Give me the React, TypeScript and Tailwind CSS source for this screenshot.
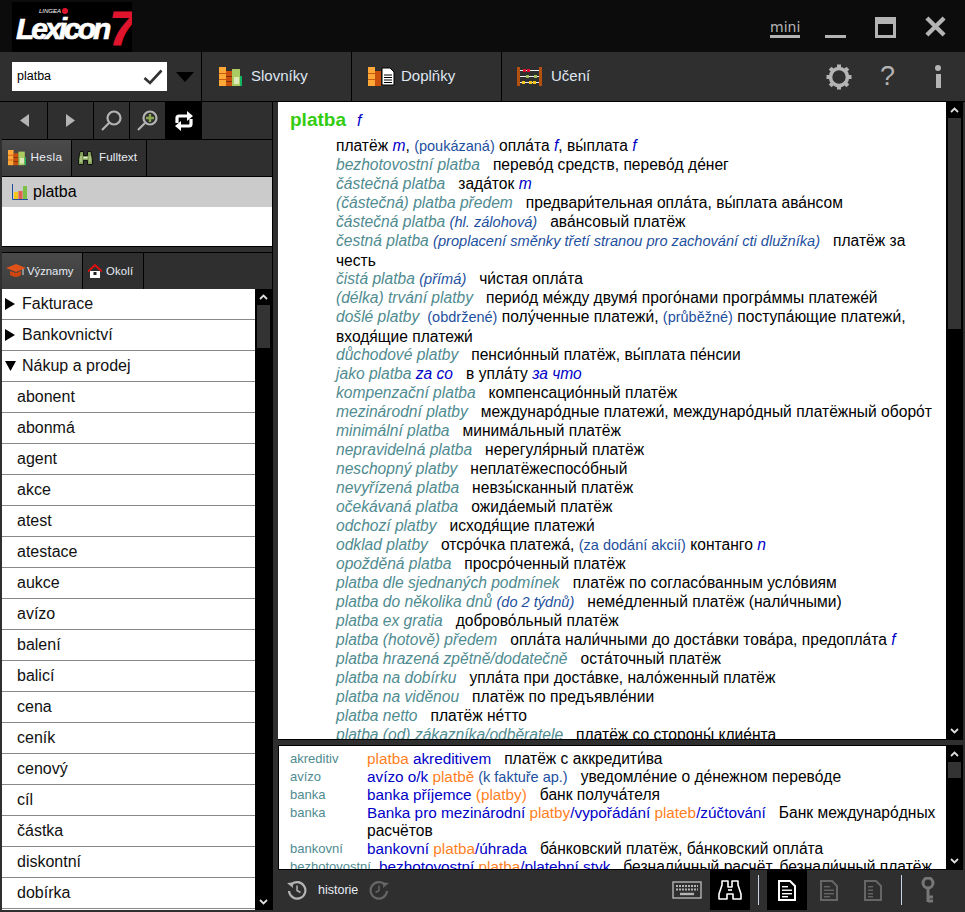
import React from 'react';

type Seg = [string, string];
const cls: Record<string, string> = {
  c: 'text-black',
  t: 'italic text-[#4f8b90]',
  b: 'italic text-[#0000c8]',
  z: 'text-[#0000c8]',
  d: 'text-[#1d4f9e] text-[14.5px]',
  i: 'italic text-[#1d4f9e] text-[14.6px]',
};
const G = '\u00a0\u00a0 ';
const A = '\u0301';
const mainLines: Seg[][] = [
  [['c', 'платёж '], ['b', 'm'], ['c', ', '], ['d', '(poukázaná)'], ['c', ` опла${A}та `], ['b', 'f'], ['c', `, вы${A}плата `], ['b', 'f']],
  [['t', 'bezhotovostní platba'], ['c', `${G}перево${A}д средств, перево${A}д де${A}нег`]],
  [['t', 'částečná platba'], ['c', `${G}зада${A}ток `], ['b', 'm']],
  [['t', '(částečná) platba předem'], ['c', `${G}предвари${A}тельная опла${A}та, вы${A}плата ава${A}нсом`]],
  [['t', 'částečná platba '], ['i', '(hl. zálohová)'], ['c', `${G}ава${A}нсовый платёж`]],
  [['t', 'čestná platba '], ['i', '(proplacení směnky třetí stranou pro zachování cti dlužníka)'], ['c', `${G}платёж за честь`]],
  [['t', 'čistá platba '], ['i', '(přímá)'], ['c', `${G}чи${A}стая опла${A}та`]],
  [['t', '(délka) trvání platby'], ['c', `${G}перио${A}д ме${A}жду двумя${A} прого${A}нами програ${A}ммы платеже${A}й`]],
  [['t', 'došlé platby'], ['d', '\u00a0\u00a0(obdržené)'], ['c', ` полу${A}ченные платежи${A}, `], ['d', '(průběžné)'], ['c', ` поступа${A}ющие платежи${A}, входя${A}щие платежи${A}`]],
  [['t', 'důchodové platby'], ['c', `${G}пенсио${A}нный платёж, вы${A}плата пе${A}нсии`]],
  [['t', 'jako platba '], ['b', 'za co'], ['c', `${G}в упла${A}ту `], ['b', 'за что']],
  [['t', 'kompenzační platba'], ['c', `${G}компенсацио${A}нный платёж`]],
  [['t', 'mezinárodní platby'], ['c', `${G}междунаро${A}дные платежи${A}, междунаро${A}дный платёжный оборо${A}т`]],
  [['t', 'minimální platba'], ['c', `${G}минима${A}льный платёж`]],
  [['t', 'nepravidelná platba'], ['c', `${G}нерегуля${A}рный платёж`]],
  [['t', 'neschopný platby'], ['c', `${G}неплатёжеспосо${A}бный`]],
  [['t', 'nevyřízená platba'], ['c', `${G}невзы${A}сканный платёж`]],
  [['t', 'očekávaná platba'], ['c', `${G}ожида${A}емый платёж`]],
  [['t', 'odchozí platby'], ['c', `${G}исходя${A}щие платежи${A}`]],
  [['t', 'odklad platby'], ['c', `${G}отсро${A}чка платежа${A}, `], ['d', '(za dodání akcií)'], ['c', ' контанго '], ['b', 'n']],
  [['t', 'opožděná platba'], ['c', `${G}просро${A}ченный платёж`]],
  [['t', 'platba dle sjednaných podmínek'], ['c', `${G}платёж по согласо${A}ванным усло${A}виям`]],
  [['t', 'platba do několika dnů '], ['i', '(do 2 týdnů)'], ['c', `${G}неме${A}дленный платёж (нали${A}чными)`]],
  [['t', 'platba ex gratia'], ['c', `${G}доброво${A}льный платёж`]],
  [['t', 'platba (hotově) předem'], ['c', `${G}опла${A}та нали${A}чными до доста${A}вки това${A}ра, предопла${A}та `], ['b', 'f']],
  [['t', 'platba hrazená zpětně/dodatečně'], ['c', `${G}оста${A}точный платёж`]],
  [['t', 'platba na dobírku'], ['c', `${G}упла${A}та при доста${A}вке, нало${A}женный платёж`]],
  [['t', 'platba na viděnou'], ['c', `${G}платёж по предъявле${A}нии`]],
  [['t', 'platba netto'], ['c', `${G}платёж не${A}тто`]],
  [['t', 'platba (od) zákazníka/odběratele'], ['c', `${G}платёж со стороны${A} клие${A}нта`]],
];

const bCls: Record<string, string> = {
  o: 'text-[#ff7f1e] text-[15.3px]',
  n: 'text-[#0000c8] text-[15.3px]',
  d: 'text-[#1d4f9e] text-[14.5px]',
  c: 'text-black',
};
const bottomRows: { w: string; s: Seg[]; wide?: boolean; tall?: boolean }[] = [
  { w: 'akreditiv', s: [['o', 'platba'], ['n', ' akreditivem'], ['c', `${G}платёж с аккредити${A}ва`]] },
  { w: 'avízo', s: [['n', 'avízo o/k '], ['o', 'platbě'], ['d', ' (k faktuře ap.)'], ['c', `${G}уведомле${A}ние о де${A}нежном перево${A}де`]] },
  { w: 'banka', s: [['n', 'banka příjemce '], ['o', '(platby)'], ['c', `${G}банк получа${A}теля`]] },
  { w: 'banka', tall: true, s: [['n', 'Banka pro mezinárodní '], ['o', 'platby'], ['n', '/vypořádání '], ['o', 'plateb'], ['n', '/zúčtování'], ['c', `${G}Банк междунаро${A}дных расчётов`]] },
  { w: 'bankovní', s: [['n', 'bankovní '], ['o', 'platba'], ['n', '/úhrada'], ['c', `${G}ба${A}нковский платёж, ба${A}нковский опла${A}та`]] },
  { w: 'bezhotovostní', wide: true, s: [['n', 'bezhotovostní '], ['o', 'platba'], ['n', '/platební styk'], ['c', `${G}безнали${A}чный расчёт, безнали${A}чный платёж`]] },
];

const leftRows = ['abonent', 'abonmá', 'agent', 'akce', 'atest', 'atestace', 'aukce', 'avízo', 'balení', 'balicí', 'cena', 'ceník', 'cenový', 'cíl', 'částka', 'diskontní', 'dobírka'];

function Books({ s = 1 }: { s?: number }) {
  return (
    <svg width={23 * s} height={19 * s} viewBox="0 0 23 19" className="shrink-0">
      <rect x="0" y="0" width="7" height="19" fill="#ffa838" />
      <rect x="0" y="6" width="7" height="1" fill="#c85a10" />
      <rect x="0" y="12" width="7" height="1" fill="#c85a10" />
      <rect x="7" y="4" width="6" height="15" fill="#c94f0c" />
      <rect x="7" y="9" width="6" height="1" fill="#7d2c04" />
      <rect x="7" y="14" width="6" height="1" fill="#7d2c04" />
      <rect x="13" y="2" width="8" height="17" fill="#a9cb62" />
      <rect x="15" y="10" width="5" height="7" fill="#dde9b8" />
      <rect x="21" y="9" width="2" height="10" fill="#12b560" />
    </svg>
  );
}

function Abacus() {
  return (
    <svg width="25" height="19" viewBox="0 0 25 19" className="shrink-0">
      <rect x="0" y="0" width="3" height="19" fill="#b5510f" />
      <rect x="22" y="0" width="3" height="19" fill="#b5510f" />
      <rect x="3" y="3" width="19" height="1" fill="#eee" />
      <rect x="3" y="9" width="19" height="1" fill="#eee" />
      <rect x="3" y="15" width="19" height="1" fill="#eee" />
      <rect x="6" y="2" width="3" height="3" fill="#e0102c" />
      <rect x="10" y="2" width="3" height="3" fill="#e0102c" />
      <rect x="9" y="8" width="3" height="3" fill="#9fbf58" />
      <rect x="17" y="8" width="3" height="3" fill="#9fbf58" />
      <rect x="5" y="14" width="3" height="3" fill="#f5c518" />
      <rect x="12" y="14" width="3" height="3" fill="#f5c518" />
      <rect x="16" y="14" width="3" height="3" fill="#f5c518" />
    </svg>
  );
}

function BinocularsSmall() {
  return (
    <svg width="15" height="14" viewBox="0 0 15 14" className="shrink-0">
      <path d="M2 .5h3.5v4h4v-4H13l1.5 8v5h-5v-4h-4v4h-5v-5z" fill="#83a35a" stroke="#111" strokeWidth="1" />
      <path d="M5.5 6h4v1.5h-4z" fill="#e8f0d0" />
      <path d="M3 5v6M12 5v6" stroke="#c3d69a" strokeWidth="1.2" />
    </svg>
  );
}

function BinocularsBig() {
  return (
    <svg width="24" height="24" viewBox="0 0 24 24" className="shrink-0">
      <path d="M4 3h6v6h4V3h6v4l3 9v5h-8v-5h-6v5H1v-5l3-9z" fill="#000" stroke="#fff" strokeWidth="1.6" strokeLinejoin="round" />
      <path d="M10 12h4" stroke="#fff" strokeWidth="1.6" />
    </svg>
  );
}

function Doc({ color, filled, dotted }: { color: string; filled?: boolean; dotted?: boolean }) {
  return (
    <svg width="18" height="21" viewBox="0 0 18 21">
      <path d="M1 1h11l5 5v14H1z" fill={filled ? '#000' : 'none'} stroke={color} strokeWidth="2" />
      {[6, 9.5, 13, 16].map((y, i) => (
        <rect key={y} x="4" y={y} width={dotted ? 5 : i === 0 ? 6 : i === 3 ? 6 : 10} height="1.4" fill={color} />
      ))}
    </svg>
  );
}

function Mag({ plus }: { plus?: boolean }) {
  return (
    <svg width="21" height="21" viewBox="0 0 21 21">
      <circle cx="13" cy="8" r="6.5" fill="none" stroke="#b4b4b4" strokeWidth="2.2" />
      <path d="M8 13l-7 7" stroke="#b4b4b4" strokeWidth="2.2" />
      {plus && <path d="M13 4v8M9 8h8" stroke="#8aa84f" strokeWidth="2.4" />}
    </svg>
  );
}

function HistoryIcon({ color, flip }: { color: string; flip?: boolean }) {
  return (
    <svg width="20" height="20" viewBox="0 0 20 20" className={flip ? '-scale-x-100' : ''}>
      <path d="M4 5A8.2 8.2 0 1 1 2 11" fill="none" stroke={color} strokeWidth="2.2" />
      <path d="M0 3l5.5-.5L6 8z" fill={color} />
      <path d="M10 5.5V10.5l3.5 2" fill="none" stroke={color} strokeWidth="1.5" />
    </svg>
  );
}

function Scrollbar({ thumbH }: { thumbH: string }) {
  return (
    <div className="w-[17px] shrink-0 bg-black flex flex-col items-center">
      <div className="h-[16px] shrink-0 flex items-center justify-center">
        <svg width="9" height="6" viewBox="0 0 9 6"><path d="M1 5l3.5-3.5L8 5" fill="none" stroke="#ddd" strokeWidth="1.8" /></svg>
      </div>
      <div className={`w-[13px] shrink-0 bg-[#333] ${thumbH}`} />
      <div className="flex-1" />
      <div className="h-[16px] shrink-0 flex items-center justify-center">
        <svg width="9" height="6" viewBox="0 0 9 6"><path d="M1 1l3.5 3.5L8 1" fill="none" stroke="#ddd" strokeWidth="1.8" /></svg>
      </div>
    </div>
  );
}

const Segs = ({ s, map }: { s: Seg[]; map: Record<string, string> }) => (
  <>
    {s.map((x, i) => (
      <span key={i} className={map[x[0]]}>{x[1]}</span>
    ))}
  </>
);

export default function App() {
  return (
    <div className="w-[965px] h-[912px] flex flex-col overflow-hidden bg-[#2f2f2f] font-['Liberation_Sans',Arial,sans-serif]">
      {/* title bar */}
      <div className="h-[52px] shrink-0 bg-[#0c0c0c] flex items-start pl-[12px]">
        <div className="w-[120px] h-[50px] mt-[2px] bg-black relative overflow-hidden flex items-start pl-[4px]">
          <span className="text-white font-bold italic text-[30px] tracking-[-3px] leading-none mt-[12px] [-webkit-text-stroke:0.7px_white]">Lexicon</span>
          <span className="text-[#e0142c] font-bold italic text-[48px] leading-none ml-[1px] mt-[3px] [-webkit-text-stroke:1px_#e0142c]">7</span>
          <span className="absolute left-[27px] top-[6px] text-[6px] italic text-white leading-none">LINGEA</span>
          <span className="absolute left-[50px] top-[6px] w-[6px] h-[6px] rounded-full bg-[#e0142c]" />
        </div>
        <div className="flex-1" />
        <div className="flex items-start text-[#b4b4b4] pr-[19px]">
          <div className="mt-[19px] h-[19px] w-[30px] border-b-[3px] border-[#b4b4b4] font-['DejaVu_Sans',sans-serif] text-[14px] leading-[16px]">mini</div>
          <div className="ml-[25px] mt-[35px] w-[21px] h-[3px] bg-[#b4b4b4]" />
          <div className="ml-[29px] mt-[17px] w-[21px] h-[21px] border-[3px] border-t-[7px] border-[#b4b4b4]" />
          <svg className="ml-[29px] mt-[16px]" width="21" height="21" viewBox="0 0 22 22"><path d="M2 2l18 18M20 2L2 20" stroke="#b4b4b4" strokeWidth="4.5" /></svg>
        </div>
      </div>
      {/* toolbar */}
      <div className="h-[50px] shrink-0 flex bg-[#2f2f2f] border-b border-black text-[#dfe6f2] text-[15px]">
        <div className="w-[202px] shrink-0 flex items-center pl-[12px] border-r border-black">
          <div className="w-[155px] h-[29px] bg-white flex items-center justify-between pl-[5px] pr-[4px] text-[12.5px] text-black">
            <span>platba</span>
            <svg width="20" height="16" viewBox="0 0 20 16"><path d="M1.5 9l5.5 5L18.5 1.5" fill="none" stroke="#333" strokeWidth="2.6" /></svg>
          </div>
          <svg className="ml-[9px]" width="18" height="10" viewBox="0 0 18 10"><path d="M0 0h18L9 10z" fill="#000" /></svg>
        </div>
        <div className="w-[150px] shrink-0 flex items-center pl-[17px] gap-[9px] border-r border-black">
          <Books /><span>Slovníky</span>
        </div>
        <div className="w-[150px] shrink-0 flex items-center pl-[16px] gap-[6px] border-r border-black">
          <div className="flex items-end">
            <svg width="13" height="19" viewBox="0 0 13 19"><rect width="7" height="19" fill="#ffa838" /><rect x="7" y="4" width="6" height="15" fill="#c94f0c" /><rect y="6" width="7" height="1" fill="#c85a10" /><rect y="12" width="7" height="1" fill="#c85a10" /></svg>
            <svg width="14" height="19" viewBox="0 0 14 19"><path d="M1 1h8l4 4v13H1z" fill="#fff" stroke="#000" strokeWidth="1" /><path d="M3 8h8M3 10.5h8M3 13h8M3 15.5h8" stroke="#000" /></svg>
          </div>
          <span>Doplňky</span>
        </div>
        <div className="w-[150px] shrink-0 flex items-center pl-[15px] gap-[9px]">
          <Abacus /><span>Učení</span>
        </div>
        <div className="flex-1" />
        <div className="flex items-center text-[#b4b4b4] pr-[24px]">
          <svg width="26" height="26" viewBox="0 0 26 26">
            <circle cx="13" cy="13" r="8.5" fill="none" stroke="#b4b4b4" strokeWidth="3.6" />
            {[0, 45, 90, 135, 180, 225, 270, 315].map((a) => (
              <rect key={a} x="11" y="0.5" width="4" height="4" fill="#b4b4b4" transform={`rotate(${a} 13 13)`} />
            ))}
          </svg>
          <span className="ml-[28px] text-[27px] leading-none">?</span>
          <div className="ml-[40px] flex flex-col items-center gap-[3px]">
            <div className="w-[6px] h-[6px] rounded-full bg-[#b4b4b4]" />
            <div className="w-[5px] h-[14px] bg-[#b4b4b4]" />
          </div>
        </div>
      </div>
      {/* body */}
      <div className="flex-1 min-h-0 flex pl-[2px] pr-[2px] pb-[2px]">
        {/* left */}
        <div className="w-[271px] shrink-0 flex flex-col border-r border-black">
          <div className="h-[38px] shrink-0 flex border-b border-black">
            <div className="w-[46px] border-r border-black flex items-center justify-center">
              <svg width="9" height="13" viewBox="0 0 9 13"><path d="M9 0v13L0 6.5z" fill="#b4b4b4" /></svg>
            </div>
            <div className="w-[46px] border-r border-black flex items-center justify-center">
              <svg width="9" height="13" viewBox="0 0 9 13"><path d="M0 0v13l9-6.5z" fill="#b4b4b4" /></svg>
            </div>
            <div className="w-[36px] border-r border-black flex items-center justify-center"><Mag /></div>
            <div className="w-[35px] flex items-center justify-center"><Mag plus /></div>
            <div className="w-[37px] bg-black flex items-center justify-center">
              <svg width="20" height="20" viewBox="0 0 20 20"><path d="M3 12V7q0-2 2-2h9M17 8v5q0 2-2 2H6" fill="none" stroke="#fff" strokeWidth="3.2" /><path d="M13 0l6 5-6 5zM7 10l-6 5 6 5z" fill="#fff" /></svg>
            </div>
          </div>
          <div className="h-[37px] shrink-0 flex border-b border-black text-[11.8px] text-[#e8edf5]">
            <div className="w-[70px] border-r border-black bg-gradient-to-b from-[#4a4a4a] to-[#3d3d3d] flex items-center pl-[6px] gap-[4px]">
              <Books s={0.8} /><span className="tracking-[0.4px]">Hesla</span>
            </div>
            <div className="w-[75px] border-r border-black flex items-center pl-[6px] gap-[6px]">
              <BinocularsSmall /><span>Fulltext</span>
            </div>
          </div>
          <div className="h-[70px] shrink-0 bg-white border-b border-black text-[16px] text-black">
            <div className="h-[30px] bg-[#cbcbcb] flex items-center pl-[10px] gap-[5px]">
              <svg width="16" height="16" viewBox="0 0 16 16">
                <path d="M.5 0v15.5H16" fill="none" stroke="#1d4f9e" />
                <rect x="2" y="8" width="4" height="7" fill="#f5c518" />
                <rect x="6.5" y="7" width="4" height="8" fill="#e0604c" />
                <rect x="11" y="2" width="4" height="13" fill="#7cc144" />
              </svg>
              <span>platba</span>
            </div>
          </div>
          <div className="h-[6px] shrink-0 border-b border-black" />
          <div className="h-[36px] shrink-0 flex text-[11.3px] text-[#e8edf5]">
            <div className="w-[81px] border-r border-black bg-gradient-to-b from-[#4a4a4a] to-[#3d3d3d] flex items-center pl-[4px] gap-[1px]">
              <svg width="20" height="14" viewBox="0 0 20 14"><path d="M10 0l10 4-10 4L0 4z" fill="#e0521a" /><path d="M4 7v4q6 4 11 0V7l-5 2z" fill="#d04510" /><path d="M17 5v6" stroke="#ddd" /></svg>
              <span>Významy</span>
            </div>
            <div className="w-[61px] border-r border-black flex items-center pl-[5px] gap-[4px]">
              <svg width="14" height="14" viewBox="0 0 14 14"><path d="M2 7h10v7H2z" fill="#fff" /><path d="M0 7.5L7 1l7 6.5" fill="none" stroke="#e01010" strokeWidth="1.8" /><rect x="5.5" y="8" width="3" height="3" fill="#222" /></svg>
              <span className="tracking-[0.2px]">Okolí</span>
            </div>
          </div>
          <div className="flex-1 min-h-0 flex">
            <div className="flex-1 min-w-0 bg-white overflow-hidden text-[16px] text-[#111]">
              {['Fakturace', 'Bankovnictví'].map((t) => (
                <div key={t} className="h-[31px] border-b border-[#888] flex items-center pl-[3px] gap-[7px]">
                  <svg width="10" height="12" viewBox="0 0 10 12"><path d="M0 0v12l10-6z" fill="#000" /></svg>
                  <span>{t}</span>
                </div>
              ))}
              <div className="h-[31px] border-b border-[#888] flex items-center pl-[3px] gap-[6px]">
                <svg width="11" height="10" viewBox="0 0 11 10"><path d="M0 0h11L5.5 10z" fill="#000" /></svg>
                <span>Nákup a prodej</span>
              </div>
              {leftRows.map((t) => (
                <div key={t} className="h-[31px] border-b border-[#888] flex items-center pl-[15px]">{t}</div>
              ))}
            </div>
            <Scrollbar thumbH="h-[43px]" />
          </div>
        </div>
        {/* right */}
        <div className="flex-1 min-w-0 flex flex-col pl-[5px]">
          <div className="h-[638px] shrink-0 flex border-b border-black">
            <div className="flex-1 min-w-0 bg-white overflow-hidden">
              <div className="pl-[12px] pt-[5px] h-[34px] flex items-baseline">
                <span className="text-[#33cc11] font-bold text-[19px] leading-[26px]">platba</span>
                <span className="ml-[11px] italic text-[#0000c8] text-[16px]">f</span>
              </div>
              <div className="pl-[58px] pr-[4px] text-[15.6px] leading-[19px]">
                {mainLines.map((l, i) => (
                  <div key={i} className={i === 5 || i === 8 ? 'h-[38px]' : 'h-[19px]'}><Segs s={l} map={cls} /></div>
                ))}
              </div>
            </div>
            <Scrollbar thumbH="h-[211px]" />
          </div>
          <div className="h-[6px] shrink-0 border-b border-black" />
          <div className="h-[123px] shrink-0 flex">
            <div className="flex-1 min-w-0 bg-white overflow-hidden pl-[11px] pt-[4px] pr-[10px] text-[15.6px] leading-[18px] border-l border-black">
              {bottomRows.map((r, i) => (
                <div key={i} className={`flex ${r.tall ? 'h-[36px]' : 'h-[18px]'}`}>
                  <span className={`text-[#4f8b90] text-[13px] shrink-0 ${r.wide ? 'w-[89px]' : 'w-[77px]'}`}>{r.w}</span>
                  <div className={r.wide ? 'whitespace-nowrap' : ''}><Segs s={r.s} map={bCls} /></div>
                </div>
              ))}
            </div>
            <Scrollbar thumbH="h-[16px]" />
          </div>
          <div className="flex-1 min-h-0 flex items-center text-[12.5px] text-[#e8edf5] border-t border-black">
            <div className="ml-[9px]"><HistoryIcon color="#b4b4b4" /></div>
            <span className="ml-[11px]">historie</span>
            <div className="ml-[11px]"><HistoryIcon color="#666" flip /></div>
            <div className="flex-1" />
            <svg width="30" height="18" viewBox="0 0 30 18">
              <rect x="1" y="1" width="28" height="16" fill="none" stroke="#b4b4b4" strokeWidth="1.4" />
              <path d="M4 5h22M4 8.5h22" stroke="#b4b4b4" strokeWidth="2" strokeDasharray="2 1" />
              <path d="M8 13h14" stroke="#b4b4b4" strokeWidth="2.4" />
            </svg>
            <div className="ml-[8px] w-[40px] h-full bg-black flex items-center justify-center"><BinocularsBig /></div>
            <div className="mx-[8px] w-px h-[30px] bg-[#c8d4ea]" />
            <div className="w-[40px] h-full bg-black flex items-center justify-center"><Doc color="#fff" filled /></div>
            <div className="ml-[13px]"><Doc color="#666" /></div>
            <div className="ml-[26px]"><Doc color="#666" dotted /></div>
            <div className="ml-[19px] mr-[19px] w-px h-[30px] bg-[#c8d4ea]" />
            <svg width="14" height="26" viewBox="0 0 14 26">
              <circle cx="7" cy="6" r="5" fill="none" stroke="#777" strokeWidth="3" />
              <path d="M7 11v14M7 20h5M7 24h5" stroke="#777" strokeWidth="3" />
            </svg>
            <div className="w-[28px]" />
          </div>
        </div>
      </div>
    </div>
  );
}
